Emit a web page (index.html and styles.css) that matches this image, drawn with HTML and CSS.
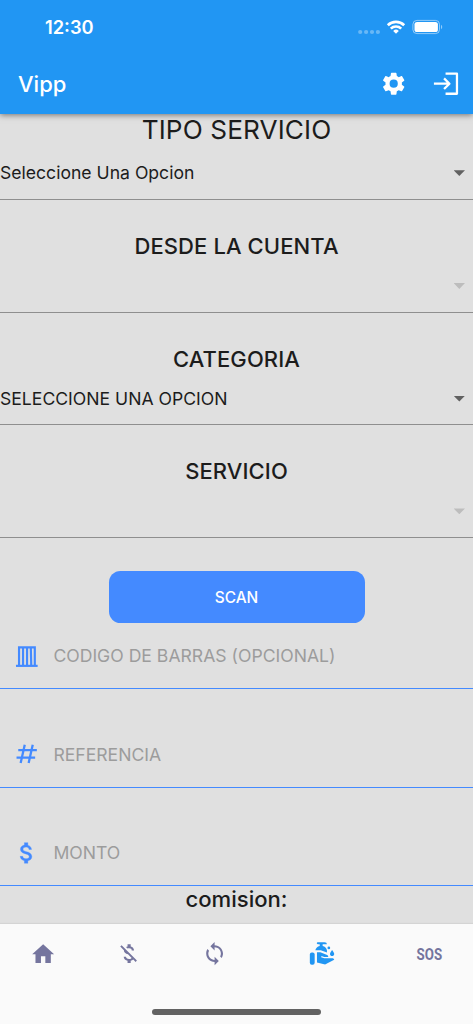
FILE: index.html
```html
<!DOCTYPE html>
<html lang="es">
<head>
<meta charset="utf-8">
<meta name="viewport" content="width=device-width, initial-scale=1">
<title>Vipp</title>
<link rel="stylesheet" href="styles.css">
</head>
<body>
<div class="app">
  <header class="header">
    <div class="status">
      <span class="time">12:30</span>
      <svg class="status-icons" viewBox="0 0 86 20" fill="#fff">
        <g opacity=".32"><circle cx="2.2" cy="14" r="2.1"/><circle cx="8.1" cy="14" r="2.1"/><circle cx="14" cy="14" r="2.1"/><circle cx="19.9" cy="14" r="2.1"/></g>
        <g fill="none" stroke="#fff" stroke-width="2.7"><path d="M29.8 7.2a11.8 11.8 0 0 1 16.4 0"/><path d="M32.8 10.6a7.5 7.5 0 0 1 10.4 0"/></g>
        <path d="M38 15.8l-2.8-2.9a4 4 0 0 1 5.6 0z"/>
        <rect x="54.9" y="2.4" width="26.6" height="13.2" rx="4" fill="none" stroke="#fff" stroke-width="1" opacity=".5"/>
        <rect x="56.5" y="4" width="23.4" height="10" rx="2.6"/>
        <path d="M83 6.8c1.7.7 1.7 3.7 0 4.4z" opacity=".5"/>
      </svg>
    </div>
    <div class="appbar">
      <h1 class="title">Vipp</h1>
      <div class="actions">
        <svg class="icon" viewBox="0 0 24 24" fill="currentColor"><path d="M19.14 12.94c.04-.3.06-.61.06-.94 0-.32-.02-.64-.07-.94l2.03-1.58c.18-.14.23-.41.12-.61l-1.92-3.32c-.12-.22-.37-.29-.59-.22l-2.39.96c-.5-.38-1.03-.7-1.62-.94l-.36-2.54c-.04-.24-.24-.41-.48-.41h-3.84c-.24 0-.43.17-.47.41l-.36 2.54c-.59.24-1.13.57-1.62.94l-2.39-.96c-.22-.08-.47 0-.59.22L2.74 8.87c-.12.21-.08.47.12.61l2.03 1.58c-.05.3-.09.63-.09.94s.02.64.07.94l-2.03 1.58c-.18.14-.23.41-.12.61l1.92 3.32c.12.22.37.29.59.22l2.39-.96c.5.38 1.03.7 1.62.94l.36 2.54c.05.24.24.41.48.41h3.84c.24 0 .44-.17.47-.41l.36-2.54c.59-.24 1.13-.56 1.62-.94l2.39.96c.22.08.47 0 .59-.22l1.92-3.32c.12-.22.07-.47-.12-.61l-2.01-1.58zM12 15.6a3.6 3.6 0 1 1 0-7.2 3.6 3.6 0 0 1 0 7.2z"/></svg>
        <svg class="icon" viewBox="0 0 24 24" fill="none" stroke="currentColor" stroke-width="2" stroke-linejoin="round"><path d="M11 3.2H21V20.8H11M.8 12H14.6M9.700 7.300L14.400 12l-4.700 4.700"/></svg>
      </div>
    </div>
  </header>

  <main class="content">
    <section class="group first">
      <h2 class="heading large">TIPO SERVICIO</h2>
      <div class="select"><span>Seleccione Una Opcion</span><i class="arrow"></i></div>
    </section>
    <section class="group">
      <h2 class="heading">DESDE LA CUENTA</h2>
      <div class="select disabled"><span></span><i class="arrow"></i></div>
    </section>
    <section class="group">
      <h2 class="heading">CATEGORIA</h2>
      <div class="select"><span>SELECCIONE UNA OPCION</span><i class="arrow"></i></div>
    </section>
    <section class="group">
      <h2 class="heading">SERVICIO</h2>
      <div class="select disabled"><span></span><i class="arrow"></i></div>
    </section>

    <button class="scan">SCAN</button>

    <div class="field compact">
      <svg class="icon" viewBox="0 0 24 24" fill="none" stroke="currentColor" stroke-width="1.9"><path d="M5.300 21V4.700H19.100V21M8.800 4.700V21M12.300 4.700V21M15.600 4.700L16 21"/><path d="M2.600 20.900H21.600"/></svg>
      <span class="hint">CODIGO DE BARRAS (OPCIONAL)</span>
    </div>
    <div class="field">
      <svg class="icon" viewBox="0 0 24 24" fill="none" stroke="currentColor" stroke-width="2"><path d="M10.300 4.100L6.700 20.100M17.300 4.100L13.700 20.100M4.600 8.800H20.900M3.100 15.400H19.400"/></svg>
      <span class="hint">REFERENCIA</span>
    </div>
    <div class="field">
      <svg class="icon" viewBox="0 -.2 24 24" fill="currentColor" stroke="currentColor" stroke-width=".3"><path d="M11.8 10.900c-2.270-.590-3-1.200-3-2.150 0-1.090 1.010-1.850 2.700-1.850 1.780 0 2.440.850 2.500 2.100h2.210c-.070-1.720-1.120-3.300-3.210-3.810V3h-3v2.160c-1.940.420-3.500 1.680-3.500 3.610 0 2.310 1.910 3.460 4.700 4.130 2.500.600 3 1.480 3 2.410 0 .690-.490 1.790-2.700 1.790-2.060 0-2.870-.920-2.980-2.100h-2.200c.120 2.190 1.760 3.420 3.680 3.830V21h3v-2.150c1.950-.370 3.500-1.500 3.500-3.550 0-2.840-2.430-3.810-4.700-4.400z"/></svg>
      <span class="hint">MONTO</span>
    </div>
    <p class="fee">comision:</p>
  </main>

  <nav class="bottom">
    <div class="tabs">
      <a class="tab"><svg class="icon home" viewBox="0 0 24 24" fill="currentColor"><path d="M10 20v-6h4v6h5v-8h3L12 3 2 12h3v8z"/></svg></a>
      <a class="tab"><svg class="icon small" viewBox="0 0 24 24" fill="currentColor"><path d="M12.5 6.9c1.78 0 2.44.85 2.5 2.1h2.21c-.07-1.72-1.12-3.3-3.21-3.81V3h-3v2.16c-.53.12-1.03.3-1.48.54l1.47 1.47c.41-.17.91-.27 1.51-.27zM5.33 4.06L4.06 5.33 7.5 8.77c0 2.08 1.56 3.21 3.91 3.91l3.51 3.51c-.34.48-1.05.91-2.42.91-2.06 0-2.87-.92-2.98-2.1h-2.2c.12 2.19 1.76 3.42 3.68 3.83V21h3v-2.15c.96-.18 1.82-.55 2.45-1.12l2.22 2.22 1.27-1.27L5.33 4.06z"/></svg></a>
      <a class="tab"><svg class="icon small" viewBox="0 0 24 24" fill="currentColor"><path d="M12 4V1L8 5l4 4V6c3.31 0 6 2.69 6 6 0 1.01-.25 1.97-.7 2.8l1.46 1.46C19.54 15.03 20 13.57 20 12c0-4.42-3.58-8-8-8zm0 14c-3.31 0-6-2.69-6-6 0-1.01.25-1.97.7-2.8L5.24 7.74C4.46 8.97 4 10.43 4 12c0 4.42 3.58 8 8 8v3l4-4-4-4v3z"/></svg></a>
      <a class="tab active"><svg class="icon small" viewBox="0 0 24 24" fill="currentColor"><rect x=".8" y="10.9" width="4.6" height="11.7" rx="1.9"/><path d="M7.6 20.4V10.8h3.2l6.5 2.6c1 .5 1.2 1.1.9 1.9h-3.7l-2.6-.9-.3 1 2.900 1h7.600c1.100 0 1.900.500 1.900 1.500l-8.700 4.600z"/><path d="M6 8.900c.600-2.400 2-3.800 4.200-4.200V3H8.400c-1.300 0-1.300-1.800 0-1.800h6.400c1.600 0 2.200.900 2.200 1.800h-4v1.700c2.200.500 3.700 2 4.100 4.200v2.100l-5.900-2.100z"/><circle cx="18.900" cy="6.600" r="1.300"/><path d="M22 8.500s2 2.500 2 3.800c0 2.700-4 2.700-4 0 0-1.300 2-3.800 2-3.800z"/></svg></a>
      <a class="tab"><span class="sos">SOS</span></a>
    </div>
    <div class="indicator"></div>
  </nav>
</div>
</body>
</html>
```
FILE: styles.css
```css
* { box-sizing: border-box; }
body {
  margin: 0;
  font-family: Inter, "Liberation Sans", sans-serif;
  color: #1c1c1c;
  background: #e0e0e0;
}
.app { display: flex; flex-direction: column; height: 1024px; overflow: hidden; }
.icon { display: block; flex: none; width: 27.4px; height: 27.4px; overflow: visible; }

.header {
  flex: none;
  height: 114px;
  color: #fff;
  background: #2196f3;
  box-shadow: 0 1px 6px rgba(0, 0, 0, .5);
  z-index: 1;
}
.status { display: flex; justify-content: space-between; height: 53px; padding: 17px 29px 0 45px; }
.time { font-size: 18.3px; line-height: 20px; font-weight: 600; }
.status-icons { width: 86px; height: 20px; margin-top: 1px; }
.appbar { display: flex; align-items: center; justify-content: space-between; height: 61px; padding: 0 12.500px 0 18px; }
.title { margin: 0; font-size: 22px; font-weight: 500; }
.actions { display: flex; gap: 26px; }

.content { flex: none; height: 810px; }
.group { display: flex; flex-direction: column; height: 112.7px; padding-top: 33px; }
.group.first { height: 85.9px; padding-top: 0; }
.heading {
  height: 26.5px;
  margin: 0;
  font-size: 22px;
  line-height: 26px;
  font-weight: 500;
  letter-spacing: .1px;
  text-align: center;
}
.heading.large { height: 32.5px; font-size: 26.2px; line-height: 32px; font-weight: 400; }
.select {
  display: flex;
  flex: 1;
  align-items: center;
  justify-content: space-between;
  padding-right: 8px;
  border-bottom: 1px solid #8f8f8f;
  font-size: 17.6px;
}
.arrow { width: 11.4px; height: 5.8px; margin-top: 1px; background: #616161; clip-path: polygon(0 0, 100% 0, 50% 100%); }
.disabled .arrow { background: #bdbdbd; }

.scan {
  display: block;
  width: 256px;
  height: 52px;
  margin: 33.1px auto 0;
  padding: 0;
  border: 0;
  border-radius: 11.4px;
  background: #448aff;
  color: #fff;
  font: 500 15.4px Inter, sans-serif;
}
.field {
  display: flex;
  align-items: flex-end;
  gap: 13px;
  height: 98.4px;
  padding: 0 13px 19px;
  border-bottom: 1px solid #448aff;
  color: #448aff;
}
.field.compact { height: 66.2px; }
.hint { color: #9c9c9c; font-size: 17.6px; line-height: 27px; }
.fee { margin: 0; font-size: 22.1px; line-height: 26px; font-weight: 500; text-align: center; }

.bottom {
  display: flex;
  flex: 1;
  flex-direction: column;
  align-items: center;
  justify-content: space-between;
  padding-bottom: 9.5px;
  background: #fafafa;
  box-shadow: 0 -1px 1px rgba(0, 0, 0, .05);
}
.tabs { display: flex; justify-content: space-between; width: 100%; height: 60px; padding-right: 1px; }
.tab { display: flex; align-items: center; justify-content: center; width: 86px; color: #75759e; }
.tab.active { width: 128px; color: #2196f3; }
.icon.home { width: 26.3px; height: 26.3px; }
.icon.small { width: 25.2px; height: 25.2px; }
.sos { font: 700 16px Roboto, sans-serif; transform: scaleX(.83); }
.indicator { width: 169px; height: 5.5px; border-radius: 3px; background: #626262; }
```
